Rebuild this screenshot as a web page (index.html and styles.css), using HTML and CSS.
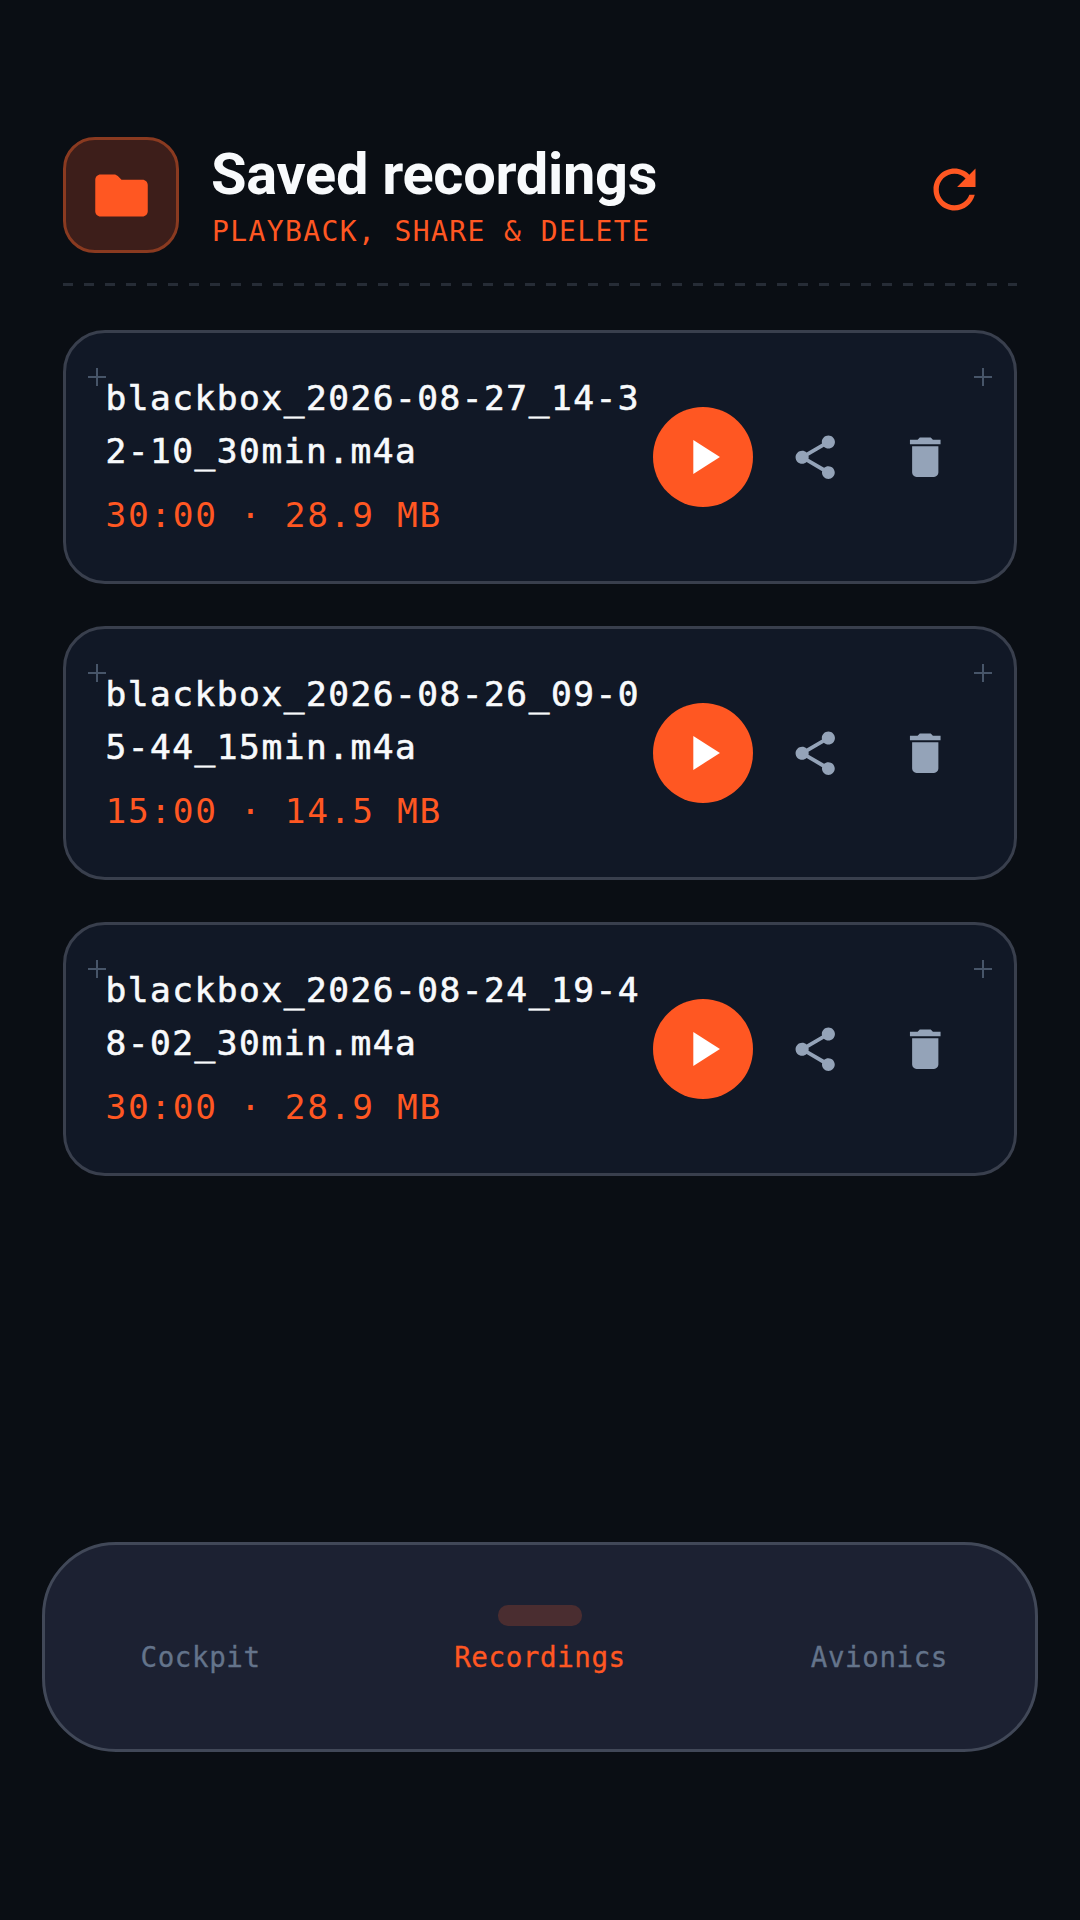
FILE: index.html
```html
<!DOCTYPE html>
<html lang="en">
<head>
    <meta charset="UTF-8">
    <meta name="viewport" content="width=device-width, initial-scale=1.0">
    <title>Saved recordings</title>
    <link rel="stylesheet" href="styles.css">
</head>
<body>

    <main class="screen">
        <header class="top-bar">
            <div class="folder-badge">
                <svg class="folder-icon" viewBox="0 0 24 24"><path d="M10.59 4.59C10.21 4.21 9.7 4 9.17 4H4c-1.1 0-1.99.9-1.99 2L2 18c0 1.1.9 2 2 2h16c1.1 0 2-.9 2-2V8c0-1.1-.9-2-2-2h-8l-1.41-1.41z"/></svg>
            </div>
            <div class="top-text">
                <h1>Saved recordings</h1>
                <p>PLAYBACK, SHARE &amp; DELETE</p>
            </div>
            <button class="refresh-btn">
                <svg viewBox="0 0 24 24"><path d="M17.65 6.35C16.2 4.9 14.21 4 12 4c-4.42 0-7.99 3.58-7.99 8s3.57 8 7.99 8c3.73 0 6.84-2.55 7.73-6h-2.08c-.82 2.33-3.04 4-5.65 4-3.31 0-6-2.69-6-6s2.69-6 6-6c1.66 0 3.14.69 4.22 1.78L13 11h7V4l-2.35 2.35z"/></svg>
            </button>
        </header>

        <div class="dash-line"></div>

        <section class="rec-list">
            <article class="rec-card">
                <span class="mark mark-left"></span>
                <span class="mark mark-right"></span>
                <div class="rec-info">
                    <div class="rec-name">blackbox_2026-08-27_14-32-10_30min.m4a</div>
                    <div class="rec-meta">30:00 · 28.9 MB</div>
                </div>
                <button class="play-btn"><svg viewBox="0 0 24 24"><path d="M8 5v14l11-7z"/></svg></button>
                <button class="tool-btn"><svg viewBox="0 0 24 24"><path d="M18 16.08c-.76 0-1.44.3-1.96.77L8.91 12.7c.05-.23.09-.46.09-.7s-.04-.47-.09-.7l7.05-4.11c.54.5 1.25.81 2.04.81 1.66 0 3-1.34 3-3s-1.34-3-3-3-3 1.34-3 3c0 .24.04.47.09.7L8.04 9.81C7.5 9.31 6.79 9 6 9c-1.66 0-3 1.34-3 3s1.34 3 3 3c.79 0 1.5-.31 2.04-.81l7.12 4.16c-.05.21-.08.43-.08.65 0 1.61 1.31 2.92 2.92 2.92 1.61 0 2.92-1.31 2.92-2.92s-1.31-2.92-2.92-2.92z"/></svg></button>
                <button class="tool-btn"><svg viewBox="0 0 24 24"><path d="M6 19c0 1.1.9 2 2 2h8c1.1 0 2-.9 2-2V7H6v12zM19 4h-3.5l-1-1h-5l-1 1H5v2h14V4z"/></svg></button>
            </article>

            <article class="rec-card">
                <span class="mark mark-left"></span>
                <span class="mark mark-right"></span>
                <div class="rec-info">
                    <div class="rec-name">blackbox_2026-08-26_09-05-44_15min.m4a</div>
                    <div class="rec-meta">15:00 · 14.5 MB</div>
                </div>
                <button class="play-btn"><svg viewBox="0 0 24 24"><path d="M8 5v14l11-7z"/></svg></button>
                <button class="tool-btn"><svg viewBox="0 0 24 24"><path d="M18 16.08c-.76 0-1.44.3-1.96.77L8.91 12.7c.05-.23.09-.46.09-.7s-.04-.47-.09-.7l7.05-4.11c.54.5 1.25.81 2.04.81 1.66 0 3-1.34 3-3s-1.34-3-3-3-3 1.34-3 3c0 .24.04.47.09.7L8.04 9.81C7.5 9.31 6.79 9 6 9c-1.66 0-3 1.34-3 3s1.34 3 3 3c.79 0 1.5-.31 2.04-.81l7.12 4.16c-.05.21-.08.43-.08.65 0 1.61 1.31 2.92 2.92 2.92 1.61 0 2.92-1.31 2.92-2.92s-1.31-2.92-2.92-2.92z"/></svg></button>
                <button class="tool-btn"><svg viewBox="0 0 24 24"><path d="M6 19c0 1.1.9 2 2 2h8c1.1 0 2-.9 2-2V7H6v12zM19 4h-3.5l-1-1h-5l-1 1H5v2h14V4z"/></svg></button>
            </article>

            <article class="rec-card">
                <span class="mark mark-left"></span>
                <span class="mark mark-right"></span>
                <div class="rec-info">
                    <div class="rec-name">blackbox_2026-08-24_19-48-02_30min.m4a</div>
                    <div class="rec-meta">30:00 · 28.9 MB</div>
                </div>
                <button class="play-btn"><svg viewBox="0 0 24 24"><path d="M8 5v14l11-7z"/></svg></button>
                <button class="tool-btn"><svg viewBox="0 0 24 24"><path d="M18 16.08c-.76 0-1.44.3-1.96.77L8.91 12.7c.05-.23.09-.46.09-.7s-.04-.47-.09-.7l7.05-4.11c.54.5 1.25.81 2.04.81 1.66 0 3-1.34 3-3s-1.34-3-3-3-3 1.34-3 3c0 .24.04.47.09.7L8.04 9.81C7.5 9.31 6.79 9 6 9c-1.66 0-3 1.34-3 3s1.34 3 3 3c.79 0 1.5-.31 2.04-.81l7.12 4.16c-.05.21-.08.43-.08.65 0 1.61 1.31 2.92 2.92 2.92 1.61 0 2.92-1.31 2.92-2.92s-1.31-2.92-2.92-2.92z"/></svg></button>
                <button class="tool-btn"><svg viewBox="0 0 24 24"><path d="M6 19c0 1.1.9 2 2 2h8c1.1 0 2-.9 2-2V7H6v12zM19 4h-3.5l-1-1h-5l-1 1H5v2h14V4z"/></svg></button>
            </article>
        </section>

        <nav class="bottom-nav">
            <a class="nav-item">Cockpit</a>
            <a class="nav-item active">Recordings</a>
            <a class="nav-item">Avionics</a>
        </nav>
    </main>

</body>
</html>
```

FILE: styles.css
```css
:root {
    --bg-color: #0a0e14;
    --card-bg: #111826;
    --card-border: #393f4d;
    --nav-bg: #1c2132;
    --nav-border: #414858;
    --accent: #ff5722;
    --muted: #94a3b8;
    --nav-text: #64748b;
    --mono: "DejaVu Sans Mono", monospace;
}

* {
    box-sizing: border-box;
    margin: 0;
    padding: 0;
}

body {
    height: 100vh;
    background-color: var(--bg-color);
    overflow: hidden;
}

button {
    display: flex;
    align-items: center;
    justify-content: center;
    background: none;
    border: none;
    flex-shrink: 0;
}

.screen {
    height: 100%;
    display: flex;
    flex-direction: column;
    padding: 137px 42px 168px;
}

/* Header */
.top-bar {
    display: flex;
    align-items: center;
    margin: 0 21px;
    height: 116px;
}

.folder-badge {
    width: 116px;
    height: 116px;
    display: flex;
    align-items: center;
    justify-content: center;
    background-color: #3d1e1a;
    border: 3px solid #8a3a20;
    border-radius: 32px;
    flex-shrink: 0;
}

.folder-icon {
    width: 63px;
    height: 63px;
    fill: var(--accent);
}

.top-text {
    flex: 1;
    margin-left: 33px;
}

h1 {
    margin-left: -1px;
    font-family: "Roboto", sans-serif;
    font-size: 57.75px;
    font-weight: 700;
    line-height: 66px;
    color: #f8fafc;
    letter-spacing: -0.3px;
}

.top-text p {
    margin-top: 8px;
    font-family: var(--mono);
    font-size: 28px;
    line-height: 34px;
    letter-spacing: 1.4px;
    color: var(--accent);
}

.refresh-btn {
    width: 126px;
    height: 126px;
    margin-bottom: 12px;
}

.refresh-btn svg {
    width: 63px;
    height: 63px;
    fill: var(--accent);
}

.dash-line {
    height: 3px;
    margin: 30px 21px 44px;
    background: repeating-linear-gradient(90deg, #262c36 0 10.5px, transparent 10.5px 21px);
}

/* Recording cards */
.rec-list {
    flex: 1;
    display: flex;
    flex-direction: column;
    gap: 42px;
    margin: 0 21px;
}

.rec-card {
    position: relative;
    height: 254px;
    display: flex;
    align-items: center;
    padding: 0 34px 0 39.5px;
    background-color: var(--card-bg);
    border: 3px solid var(--card-border);
    border-radius: 42px;
}

/* small crosshair marks in the top corners */
.mark {
    position: absolute;
    top: 35px;
    width: 18px;
    height: 18px;
    background:
        linear-gradient(#475569, #475569) center / 100% 2px no-repeat,
        linear-gradient(#475569, #475569) center / 2px 100% no-repeat;
}

.mark-left {
    left: 22px;
}

.mark-right {
    right: 22px;
}

.rec-info {
    flex: 1;
    min-width: 0;
    padding-bottom: 6px;
}

.rec-name {
    font-family: var(--mono);
    font-size: 34.5px;
    line-height: 53px;
    letter-spacing: 1.5px;
    color: #f8fafc;
    -webkit-text-stroke: 0.6px #f8fafc;
    word-break: break-all;
}

.rec-meta {
    margin-top: 15px;
    font-family: var(--mono);
    font-size: 34.5px;
    line-height: 44px;
    letter-spacing: 1.65px;
    color: var(--accent);
}

.play-btn {
    width: 100px;
    height: 100px;
    border-radius: 50%;
    background-color: var(--accent);
}

.play-btn svg {
    width: 58px;
    height: 58px;
    fill: #fff;
}

.tool-btn {
    width: 110px;
    height: 110px;
    margin-left: 7px;
}

.tool-btn + .tool-btn {
    margin-left: 0;
}

.tool-btn svg {
    width: 52.5px;
    height: 52.5px;
    fill: var(--muted);
}

/* Bottom navigation */
.bottom-nav {
    height: 210px;
    display: grid;
    grid-template-columns: repeat(3, 1fr);
    column-gap: 169px;
    padding: 0 71px;
    background-color: var(--nav-bg);
    border: 3px solid var(--nav-border);
    border-radius: 74px;
}

.nav-item {
    position: relative;
    padding-top: 94px;
    font-family: var(--mono);
    font-size: 27.5px;
    line-height: 36px;
    letter-spacing: 0.6px;
    text-align: center;
    white-space: nowrap;
    color: var(--nav-text);
    -webkit-text-stroke: 0.3px currentColor;
}

.nav-item.active {
    color: var(--accent);
}

/* pill above the selected label */
.nav-item.active::before {
    content: "";
    position: absolute;
    top: 60px;
    left: 50%;
    width: 84px;
    height: 21px;
    margin-left: -42px;
    border-radius: 10px;
    background-color: #4a2d30;
}
```
